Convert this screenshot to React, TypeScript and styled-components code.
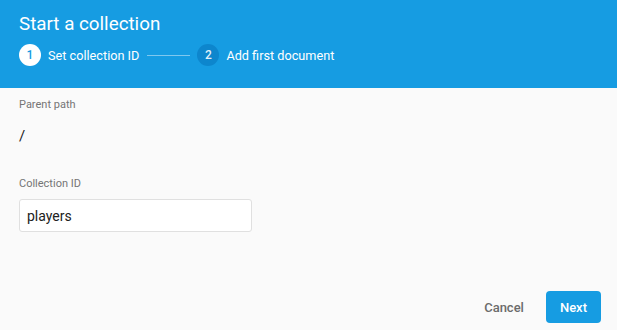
import React, { useState } from 'react';
import styled, { createGlobalStyle } from 'styled-components';

const Global = createGlobalStyle`
  html, body {
    margin: 0;
    padding: 0;
    background: #fafafa;
    font-family: Roboto, "Liberation Sans", Arial, sans-serif;
  }
`;

const Dialog = styled.div`
  width: 617px;
  height: 330px;
  display: flex;
  flex-direction: column;
  background: #fafafa;
`;

const Header = styled.div`
  background: #169ce2;
  height: 88px;
  box-sizing: border-box;
  padding: 12px 19px 0;
  color: #fff;
`;

const Title = styled.h1`
  margin: 0;
  font-size: 18.8px;
  font-weight: 400;
  line-height: 24px;
`;

const Stepper = styled.div`
  display: flex;
  align-items: center;
  margin-top: 8px;
  height: 22px;
`;

const StepDot = styled.div<{ $active?: boolean }>`
  width: 22px;
  height: 22px;
  border-radius: 50%;
  display: flex;
  align-items: center;
  justify-content: center;
  font-size: 12px;
  font-weight: 500;
  background: ${p => (p.$active ? '#fff' : '#0d86cd')};
  color: ${p => (p.$active ? '#169ce2' : 'rgba(255,255,255,0.9)')};
`;

const StepLabel = styled.span`
  margin-left: 7px;
  font-size: 12.7px;
  color: #fff;
`;

const Connector = styled.div`
  width: 43px;
  height: 1px;
  margin: 0 7px 0 8px;
  background: rgba(255, 255, 255, 0.45);
`;

const Body = styled.div`
  flex: 1;
  padding: 10px 19px 0;
`;

const Label = styled.div<{ $gap?: number }>`
  font-size: 11px;
  color: #757575;
  line-height: 14px;
  margin-top: ${p => p.$gap ?? 0}px;
`;

const Value = styled.div`
  font-size: 15px;
  color: #212121;
  line-height: 20px;
  margin-top: 14px;
`;

const Input = styled.input`
  display: block;
  box-sizing: border-box;
  width: 233px;
  height: 33px;
  margin-top: 8px;
  padding: 0 7px;
  border: 1px solid #e0e0e0;
  border-radius: 3px;
  background: #fff;
  font-family: inherit;
  font-size: 14px;
  color: #212121;
  outline: none;
`;

const Footer = styled.div`
  display: flex;
  justify-content: flex-end;
  align-items: center;
  gap: 8px;
  padding: 0 16px 7px;
`;

const Button = styled.button<{ $primary?: boolean }>`
  height: 32px;
  min-width: 55px;
  padding: 0 14px;
  border: none;
  border-radius: 4px;
  font-family: inherit;
  font-size: 13px;
  font-weight: 500;
  cursor: pointer;
  background: ${p => (p.$primary ? '#169ce2' : 'transparent')};
  color: ${p => (p.$primary ? '#fff' : '#6b6b6b')};
`;

const App: React.FC = () => {
  const [id, setId] = useState('players');

  return (
    <Dialog>
      <Global />
      <Header>
        <Title>Start a collection</Title>
        <Stepper>
          <StepDot $active>1</StepDot>
          <StepLabel>Set collection ID</StepLabel>
          <Connector />
          <StepDot>2</StepDot>
          <StepLabel>Add first document</StepLabel>
        </Stepper>
      </Header>

      <Body>
        <Label>Parent path</Label>
        <Value>/</Value>
        <Label $gap={31}>Collection ID</Label>
        <Input value={id} onChange={e => setId(e.target.value)} />
      </Body>

      <Footer>
        <Button>Cancel</Button>
        <Button $primary>Next</Button>
      </Footer>
    </Dialog>
  );
};

export default App;
